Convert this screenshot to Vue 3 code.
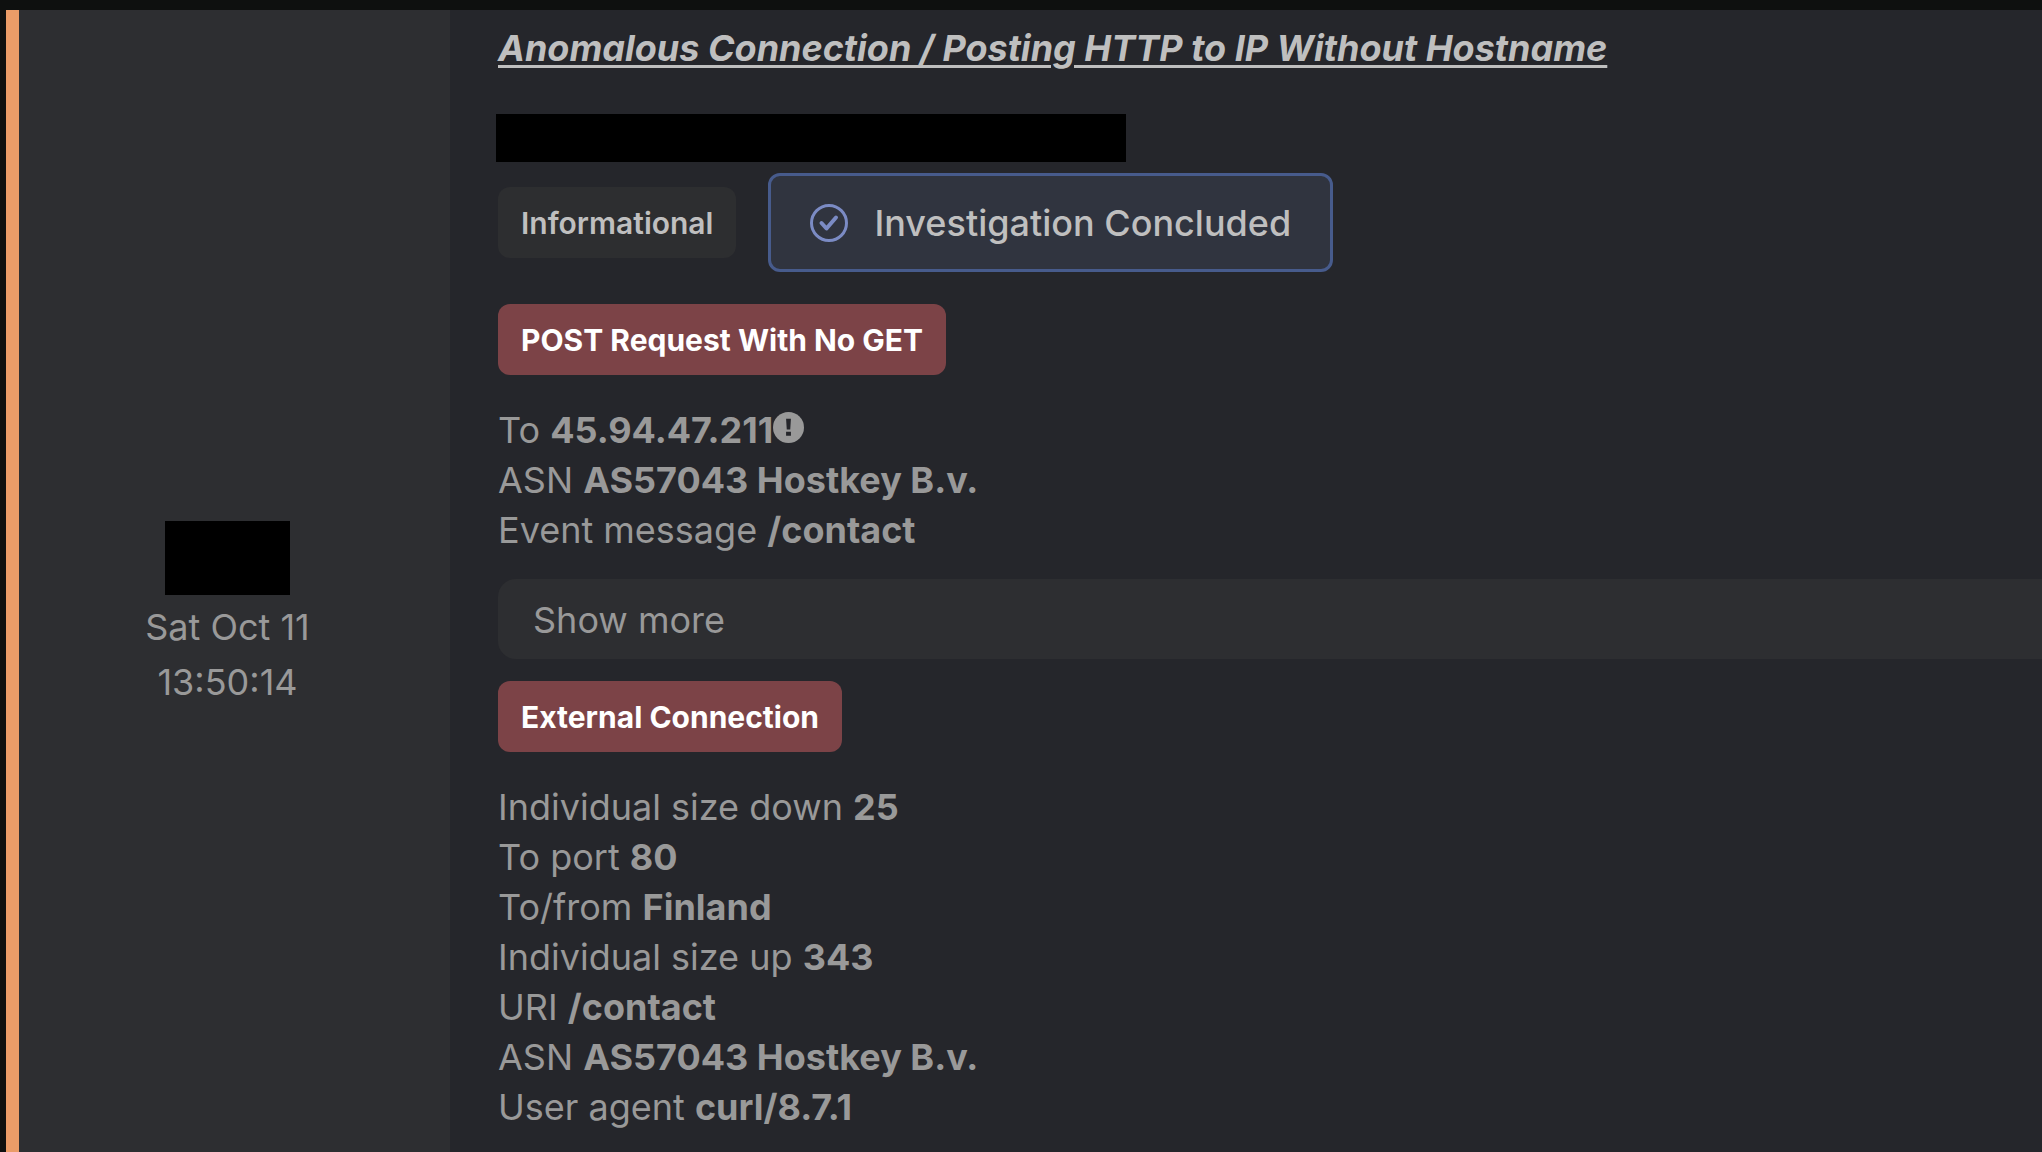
<template>
  <div class="page">
    <article class="event">
      <aside class="event-time">
        <span class="redacted redacted-icon"></span>
        <time class="stamp">
          <span>{{ date }}</span>
          <span>{{ time }}</span>
        </time>
      </aside>

      <main class="event-body">
        <h1 class="title"><a href="#">{{ title }}</a></h1>
        <span class="redacted redacted-device"></span>

        <div class="status-row">
          <span class="badge badge-info">Informational</span>
          <div class="status">
            <svg class="status-icon" viewBox="0 0 38 38" fill="none" stroke="currentColor" stroke-width="3">
              <circle cx="19" cy="19" r="17.5" />
              <path d="M11.5 19l5 5.5 9.5-11" stroke-width="4" stroke-linecap="round" stroke-linejoin="round" />
            </svg>
            <span>Investigation Concluded</span>
          </div>
        </div>

        <section v-for="group in groups" :key="group.name" class="group">
          <span class="badge badge-alert">{{ group.name }}</span>
          <ul class="fields">
            <li v-for="field in group.fields" :key="field.label">
              {{ field.label }} <strong>{{ field.value }}</strong>
              <svg v-if="field.alert" class="alert-icon" viewBox="0 0 32 32">
                <circle cx="16" cy="16" r="16" fill="currentColor" />
                <path d="M13.5 7h5l-.7 11h-3.6zM13.5 20.5h5v4h-5z" fill="#25262b" />
              </svg>
            </li>
          </ul>
          <button v-if="group.more" type="button" class="show-more">Show more</button>
        </section>
      </main>
    </article>
  </div>
</template>

<script setup>
const title = 'Anomalous Connection / Posting HTTP to IP Without Hostname'
const date = 'Sat Oct 11'
const time = '13:50:14'

const groups = [
  {
    name: 'POST Request With No GET',
    more: true,
    fields: [
      { label: 'To', value: '45.94.47.211', alert: true },
      { label: 'ASN', value: 'AS57043 Hostkey B.v.' },
      { label: 'Event message', value: '/contact' }
    ]
  },
  {
    name: 'External Connection',
    more: false,
    fields: [
      { label: 'Individual size down', value: '25' },
      { label: 'To port', value: '80' },
      { label: 'To/from', value: 'Finland' },
      { label: 'Individual size up', value: '343' },
      { label: 'URI', value: '/contact' },
      { label: 'ASN', value: 'AS57043 Hostkey B.v.' },
      { label: 'User agent', value: 'curl/8.7.1' }
    ]
  }
]
</script>

<style>
body {
  background: #0e100f;
}
</style>

<style scoped>
.page {
  box-sizing: border-box;
  display: flex;
  min-height: 100vh;
  padding: 10px 0 0 6px;
  font-family: Inter, "Open Sans", sans-serif;
  font-size: 36px;
  line-height: 50px;
  color: #999999;
}

.event {
  flex: 1;
  display: flex;
  border-bottom: 1px solid #2e252c;
}

.event-time {
  box-sizing: border-box;
  width: 444px;
  display: flex;
  flex-direction: column;
  align-items: center;
  justify-content: center;
  padding: 45px 14px 0 0;
  border-left: 13px solid #ea9c68;
  background: #2d2e31;
}

.redacted {
  display: block;
  background: #000;
}

.redacted-icon {
  width: 125px;
  height: 74px;
}

.stamp {
  display: flex;
  flex-direction: column;
  align-items: center;
  padding-top: 5px;
  line-height: 55px;
}

.event-body {
  flex: 1;
  padding: 13px 0 20px 48px;
  background: #25262b;
}

.title {
  margin: 0 0 41px;
  font-size: 36px;
  font-weight: 700;
  font-style: italic;
}

.title a {
  color: #bfbfbf;
  text-decoration-thickness: 3px;
  text-underline-offset: 4px;
}

.redacted-device {
  width: 630px;
  height: 48px;
  margin-left: -2px;
}

.status-row {
  display: flex;
  align-items: center;
  gap: 32px;
  margin: 11px 0 32px;
}

.badge {
  display: inline-block;
  padding: 11px 23px 10px;
  border-radius: 12px;
  font-size: 30px;
  font-weight: 600;
}

.badge-info {
  background: #2d2e30;
  color: #bfbfbf;
}

.badge-alert {
  background: #7c4347;
  color: #fff;
  font-weight: 700;
}

.status {
  display: flex;
  align-items: center;
  gap: 26px;
  padding: 22px 39px 21px;
  border: 3px solid #475b8c;
  border-radius: 12px;
  background: #30343f;
  color: #bfbfbf;
  font-weight: 500;
}

.status-icon {
  width: 38px;
  height: 38px;
  color: #7b8bc4;
}

.fields {
  margin: 0;
  padding: 30px 0 24px;
  list-style: none;
}

.fields strong {
  font-weight: 700;
}

.alert-icon {
  width: 31px;
  height: 31px;
}

.show-more {
  display: block;
  width: 100%;
  margin-bottom: 22px;
  padding: 16px 35px 14px;
  border: 0;
  border-radius: 18px 0 0 18px;
  background: #2d2e31;
  color: inherit;
  font: inherit;
  text-align: left;
  cursor: pointer;
}
</style>
